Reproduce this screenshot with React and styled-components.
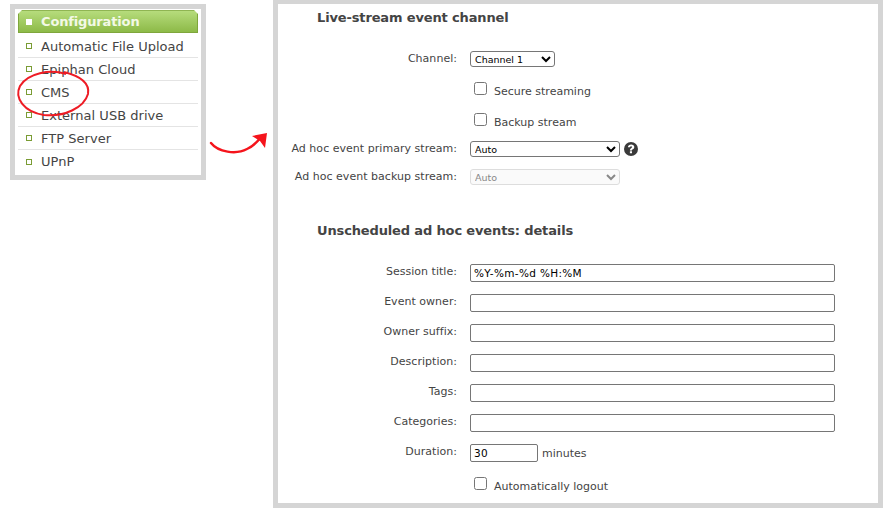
import React from "react";
import styled, { createGlobalStyle } from "styled-components";

const Global = createGlobalStyle`
  html, body { margin: 0; padding: 0; background: #fff; }
  body { font-family: "DejaVu Sans", Verdana, sans-serif; width: 886px; height: 511px; overflow: hidden; }
`;
const Page = styled.div`
  position: relative; width: 886px; height: 511px;
  display: flex; align-items: flex-start; padding-left: 10px; box-sizing: border-box;
`;
const Sidebar = styled.nav`
  width: 196px; height: 176px; margin-top: 4px; box-sizing: border-box;
  border: 5px solid #d5d5d5; padding: 1px 3px 0; background: #fff; flex: none;
`;
const Header = styled.div`
  height: 23px; margin-bottom: 2px; box-sizing: border-box; display: flex; align-items: center; gap: 9px; padding-left: 7px;
  background: linear-gradient(#b6dc7c, #8dba48); border: 1px solid #7fa63c; border-top-color:#8fb552;
  clip-path: polygon(4px 0, calc(100% - 4px) 0, 100% 4px, 100% 100%, 0 100%, 0 4px);
  color: #f3f9e6; font-weight: 700; font-size: 13px; letter-spacing: -.15px;
  &::before { content: ""; width: 6px; height: 6px; background: #fff; }
`;
const Item = styled.div`
  height: 23px; box-sizing: border-box; display: flex; align-items: center; gap: 9px; padding-left: 8px;
  color: #444; font-size: 13px; letter-spacing: .03px; border-bottom: ${p => (p.$last ? "none" : "1px solid #e4e4e4")};
  &::before { content: ""; width: 6px; height: 6px; box-sizing: border-box; border: 1px solid #7a9c34; flex: none; }
`;
const Main = styled.main`
  width: 610px; height: 508px; margin-left: 67px; box-sizing: border-box; flex: none;
  border: 5px solid #d5d5d5; border-top-width: 4px; background: #fff; padding-left: 39px;
  color: #444; font-size: 11px;
`;
const Heading = styled.h2`
  margin: ${p => p.$top}px 0 0; font-size: 13px; font-weight: 700; color: #444; line-height: 18px; letter-spacing: -.14px;
`;
const Row = styled.div`
  display: grid; grid-template-columns: 179px auto; column-gap: 13px; margin: ${p => p.$top}px 0 0 -39px;
  align-items: start; min-height: ${p => p.$h || 18}px;
`;
const Label = styled.label`
  text-align: right; line-height: 14px; margin-top: 1px; font-size: 11px; letter-spacing: .03px; color: #444; white-space: nowrap;
`;
const Control = styled.div` display: flex; align-items: center; gap: 4px; grid-column: 2; `;
const Select = styled.select`
  width: ${p => p.$w}px; height: 16px; box-sizing: border-box; padding: 0; margin: 0; font-family: "DejaVu Sans", sans-serif; font-size: 9.5px;
  border: 1px solid #767676; border-radius: 3px; background: #fff; color: #000;
  &:disabled { color: #888; border-color: #ddd; background: #fafafa; opacity: 1; }
`;
const Text = styled.input`
  width: ${p => p.$w || 365}px; height: 18px; box-sizing: border-box; margin: 0; padding: 0 3px;
  font-family: "DejaVu Sans", sans-serif; font-size: 10.5px; letter-spacing: .33px; color: #000; background: #fff;
  border: 1px solid #767676; border-radius: 2px; outline: none;
`;
const Check = styled.label`
  display: flex; align-items: flex-start; gap: 7px; padding-left: 4px; color: #444; font-size: 11px; line-height: 14px;
  & input { margin: 0; width: 13px; height: 13px; }
`;
const CheckText = styled.span` margin-top: 3px; `;
const Unit = styled.span` color: #444; font-size: 11px; `;
const Help = styled.svg` width: 14px; height: 14px; margin-top: -1px; flex: none; `;
const Overlay = styled.svg` position: absolute; left: 0; top: 0; width: 886px; height: 511px; pointer-events: none; `;

const items = ["Automatic File Upload", "Epiphan Cloud", "CMS", "External USB drive", "FTP Server", "UPnP"];
const details = [["Session title:", "%Y-%m-%d %H:%M"], ["Event owner:", ""], ["Owner suffix:", ""], ["Description:", ""], ["Tags:", ""], ["Categories:", ""]];

export default function App() {
  return (
    <Page>
      <Global />
      <Sidebar>
        <Header>Configuration</Header>
        {items.map((t, i) => <Item key={t} $last={i === items.length - 1}>{t}</Item>)}
      </Sidebar>
      <Main>
        <Heading $top={5}>Live-stream event channel</Heading>
        <Row $top={24} $h={16}>
          <Label>Channel:</Label>
          <Control><Select $w={85} defaultValue="c"><option value="c">Channel 1</option></Select></Control>
        </Row>
        <Row $top={15}><Control><Check><input type="checkbox" /><CheckText>Secure streaming</CheckText></Check></Control></Row>
        <Row $top={13}><Control><Check><input type="checkbox" /><CheckText>Backup stream</CheckText></Check></Control></Row>
        <Row $top={10} $h={16}>
          <Label>Ad hoc event primary stream:</Label>
          <Control>
            <Select $w={150}><option>Auto</option></Select>
            <Help viewBox="0 0 14 14">
              <circle cx="7" cy="7" r="7" fill="#3a3a3a" />
              <path d="M3.9 5.2C4.1 3.3 5.4 2.4 7.2 2.4c1.8 0 3.1 1 3.1 2.5 0 1.2-.7 1.8-1.5 2.3-.6.4-.8.6-.8 1.3H5.9c0-1.2.4-1.8 1.1-2.3.6-.4 1-.7 1-1.2 0-.5-.4-.8-.9-.8-.6 0-1 .4-1.1 1z M5.9 9.3H8V11.3H5.9z" fill="#fff" />
            </Help>
          </Control>
        </Row>
        <Row $top={12} $h={16}>
          <Label>Ad hoc event backup stream:</Label>
          <Control><Select $w={150} disabled><option>Auto</option></Select></Control>
        </Row>
        <Heading $top={37}>Unscheduled ad hoc events: details</Heading>
        {details.map(([l, v], i) => (
          <Row key={l} $top={i === 0 ? 24 : 12}>
            <Label>{l}</Label>
            <Control><Text defaultValue={v} /></Control>
          </Row>
        ))}
        <Row $top={12}>
          <Label>Duration:</Label>
          <Control><Text $w={68} defaultValue="30" /><Unit>minutes</Unit></Control>
        </Row>
        <Row $top={15}><Control><Check><input type="checkbox" /><CheckText>Automatically logout</CheckText></Check></Control></Row>
      </Main>
      <Overlay viewBox="0 0 886 511" fill="none">
        <path d="M66 74C50 69 28 73 20 86C14 98 24 112 44 115C64 117 84 108 88 94C90 83 80 76 64 72" stroke="#ee1c25" strokeWidth="2" />
        <path d="M211 143C218 152 236 155 247 149C254 146 258 141 261 137" stroke="#f5141c" strokeWidth="2.4" strokeLinecap="round" />
        <path d="M252 136L267 133L265 148L260 141Z" fill="#f5141c" />
      </Overlay>
    </Page>
  );
}
